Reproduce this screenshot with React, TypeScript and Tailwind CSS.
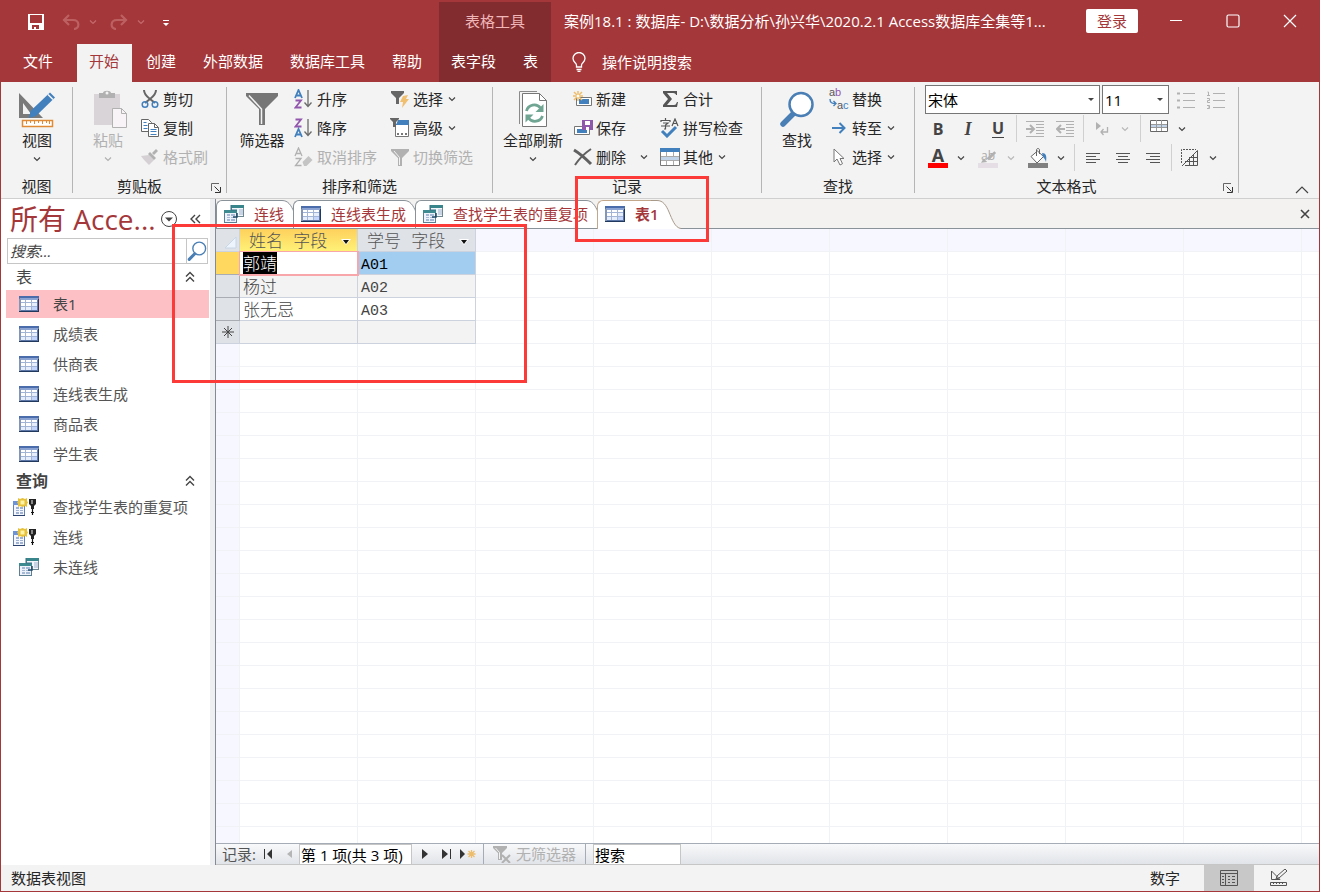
import React from 'react';
import clsx from 'clsx';

/* ---------- small glyphs ---------- */

const Chevron: React.FC<{ className?: string }> = ({ className = 'text-[#444]' }) => (
  <svg viewBox="0 0 8 6" className={clsx('h-[6px] w-[8px] shrink-0', className)} fill="none" stroke="currentColor" strokeWidth="1.2">
    <path d="M1 1.5 4 4.5 7 1.5" />
  </svg>
);

const DoubleUp = () => (
  <svg viewBox="0 0 10 12" className="h-3 w-[10px]" fill="none" stroke="#444" strokeWidth="1.4">
    <path d="M1 5.5 5 1.5 9 5.5M1 10.5 5 6.5 9 10.5" />
  </svg>
);

const Launcher = () => (
  <svg viewBox="0 0 10 10" className="h-[10px] w-[10px]" fill="none" stroke="#666" strokeWidth="1">
    <path d="M.5 8V.5H8" />
    <path d="M3.5 3.5 8.5 8.5M9.5 4V9.5H4" stroke="#333" />
  </svg>
);

const TableIcon = () => (
  <svg viewBox="0 0 20 16" className="h-4 w-5 shrink-0">
    <rect width="20" height="16" fill="#5d77a8" />
    <rect width="20" height="2" fill="#4a6cab" />
    <path d="M1 2h18v2H1z" fill="#8ba3d3" />
    <path d="M0 3h2v12H0z" fill="#8496b5" />
    <path d="M2 4h16v10H2z" fill="#a3b5d6" />
    <path d="M2 4h4v2H2zM7 4h5v2H7zM13 4h5v2h-5zM2 7h4v3H2zM7 7h5v3H7z" fill="#fff" />
    <path d="M13 7h5v3h-5zM2 11h4v3H2zM7 11h5v3H7z" fill="#e6edfb" />
    <path d="M13 11h5v3h-5z" fill="#c3d5fb" />
    <path d="M0 15h20v1H0zM19 3h1v13h-1z" fill="#22395f" />
  </svg>
);

const QueryIcon = () => (
  <svg viewBox="0 0 20 18" className="h-[18px] w-5 shrink-0">
    <path d="M7 0h13v12H7z" fill="#6c8790" />
    <path d="M7 0h13v3H7z" fill="#38868c" />
    <path d="M8 3h11v8H8z" fill="#f3f6fb" />
    <path d="M15 5h4M15 7h4M15 9h4" stroke="#9db1cd" />
    <path d="M0 5h13v13H0z" fill="#5c7f93" />
    <path d="M0 5h13v3H0z" fill="#3d8a90" />
    <path d="M1 8h11v9H1z" fill="#eef3fb" />
    <path d="M3 9h3v2H3zM7 9h4v2H7zM3 12h3v1H3zM7 12h4v1H7zM3 14h3v2H3zM7 14h4v2H7z" fill="#a5b8d6" />
    <path d="M13 8v4H9" fill="none" stroke="#1d4867" strokeWidth="1.5" />
    <path d="M7 0v5h6" fill="none" stroke="#3a6f86" />
  </svg>
);

const MakeTableIcon = () => (
  <svg viewBox="0 0 24 18" className="h-[18px] w-6 shrink-0">
    <path d="M.5 3.500H11.500V17.500H.5z" fill="#f4f7fd" stroke="#6580b4" />
    <path d="M0 3h9v4H0z" fill="#6d94d8" />
    <path d="M3 9h3v2H3zM7 9h3v2H7zM3 12h3v1H3zM7 12h3v1H7zM3 14h3v2H3zM7 14h3v2H7z" fill="#9fb2d2" />
    <path d="M0 17h12v1H0z" fill="#2a4270" />
    <path d="M5 0l2 1 2.500-1L12 1l2-1v3l1 1.500L14 6v3l-2-1-2.500 1L7 8 5 9V6L4 4.500 5 3z" fill="#e6c13a" />
    <path d="M7.500 2.500h4v4h-4z" fill="#fff3a8" />
    <path d="M16 1h7v5l-2 2v3h-3V8l-2-2z" fill="#222" />
    <path d="M18 2h2v4h-2z" fill="#888" />
    <path d="M19.500 11v6M18 14.500h3" stroke="#111" strokeWidth="1.200" />
  </svg>
);

const Magnifier: React.FC<{ size: string; fill?: string }> = ({ size, fill = 'none' }) => (
  <svg viewBox="0 0 36 36" className={size}>
    <path d="M14 23 4 33" stroke="#4a7fb5" strokeWidth="5.500" strokeLinecap="round" />
    <circle cx="22" cy="13.500" r="11.500" fill={fill} stroke="#4a7fb5" strokeWidth="2.500" />
  </svg>
);

const FunnelSmall: React.FC<{ color: string }> = ({ color }) => (
  <svg viewBox="0 0 20 18" className="h-[18px] w-5">
    <path d="M1 1h18v2l-7 7v8H8v-8L1 3z" fill={color} />
    <path d="M4 3l5.500 6.500V17" fill="none" stroke="#f3f3f3" />
  </svg>
);

const SortIcon: React.FC<{ top: string; bottom: string; off?: boolean }> = ({ top, bottom, off }) => {
  const blue = off ? '#b1b1b1' : '#4280bd';
  const purple = off ? '#b1b1b1' : '#9256ad';
  const draw = (l: string, y: number) =>
    l === 'A' ? (
      <path d={`M1 ${y + 8} 4.500 ${y} 8 ${y + 8}M2.500 ${y + 5.500}H6.500`} stroke={blue} />
    ) : (
      <path d={`M1.500 ${y + .5}H7L1.500 ${y + 7.500}H7.500`} stroke={purple} />
    );
  return (
    <svg viewBox="0 0 20 20" className="h-5 w-5" fill="none" strokeWidth={off ? 1.3 : 1.8}>
      {draw(top, 1)}
      {draw(bottom, 11)}
      {off ? (
        <path d="m8.500 15 6-6 4 4-6 6H10z" fill="#c4c4c4" />
      ) : (
        <path d="M14 1v16M10.500 13.500 14 17.500l3.500-4" stroke="#6b6b6b" strokeWidth="1.300" />
      )}
    </svg>
  );
};

/* ---------- ribbon pieces ---------- */

interface BigProps {
  icon: React.ReactNode;
  label: string;
  wide?: boolean;
  arrow?: boolean;
  disabled?: boolean;
}

const BigButton: React.FC<BigProps> = ({ icon, label, wide, arrow, disabled }) => (
  <button className={clsx('flex h-[87px] shrink-0 flex-col items-center pt-[5px]', wide ? 'w-16' : 'w-12', disabled && 'text-[#b1b1b1]')}>
    <span className="flex h-10 items-center">{icon}</span>
    <span className="leading-[22px] whitespace-nowrap">{label}</span>
    {arrow && <span className="flex h-4 items-center"><Chevron className={disabled ? 'text-[#b1b1b1]' : 'text-[#444]'} /></span>}
  </button>
);

interface SmallProps {
  icon: React.ReactNode;
  label: string;
  arrow?: boolean;
  disabled?: boolean;
}

const SmallButton: React.FC<SmallProps> = ({ icon, label, arrow, disabled }) => (
  <button className={clsx('flex h-[29px] items-center gap-[3px] whitespace-nowrap', disabled && 'text-[#b1b1b1]')}>
    <span className="flex w-5 shrink-0 justify-center">{icon}</span>
    {label}
    {arrow && <Chevron className="ml-[2px] text-[#444]" />}
  </button>
);

interface GroupProps {
  title: string;
  width: string;
  launcher?: boolean;
  children: React.ReactNode;
}

const Group: React.FC<GroupProps> = ({ title, width, launcher, children }) => (
  <>
    <section className={clsx('flex shrink-0 flex-col pt-[2px]', width)} aria-label={title}>
      <div className="flex h-[88px] items-start gap-2">{children}</div>
      <div className="flex h-[26px] items-center pt-[2px]">
        <h2 className="flex-1 text-center">{title}</h2>
        {launcher && (
          <button className="flex w-5 justify-center pt-[3px]" aria-label={`${title}设置`}><Launcher /></button>
        )}
      </div>
    </section>
    <span className="my-[5px] w-px shrink-0 bg-[#b5b5b5]" />
  </>
);

const Tool: React.FC<{ label: string; arrow?: boolean; disabled?: boolean; children: React.ReactNode }> = ({ label, arrow, disabled, children }) => (
  <button aria-label={label} className="flex h-[29px] shrink-0 items-center">
    <span className="flex w-[30px] justify-center">{children}</span>
    {arrow && <span className="flex w-4 justify-center"><Chevron className={disabled ? 'text-[#b8b8b8]' : 'text-[#444]'} /></span>}
  </button>
);

const ToolSep = () => <span className="mx-[3px] h-[27px] w-px shrink-0 bg-[#d0d0d0]" />;

const Picker: React.FC<{ label: string; value: string; width: string; font: string }> = ({ label, value, width, font }) => (
  <div className={clsx('relative h-[29px] shrink-0', width)}>
    <select aria-label={label} className={clsx('h-full w-full appearance-none border border-[#767676] bg-white px-[2px] text-[15px] text-black', font)}>
      <option>{value}</option>
    </select>
    <svg viewBox="0 0 6 3" className="pointer-events-none absolute top-[13px] right-[6px] h-[3px] w-[6px]"><path d="M0 0h6L3 3z" fill="#444" /></svg>
  </div>
);

const AlignIcon: React.FC<{ side: 'left' | 'center' | 'right' }> = ({ side }) => {
  const short = side === 'left' ? 'M1' : side === 'center' ? 'M3' : 'M5';
  return (
    <svg viewBox="0 0 16 12" className="h-3 w-4" stroke="#555">
      <path d={`M1 1.500h14${short} 4.500h10M1 7.500h14${short} 10.500h10`} />
    </svg>
  );
};

const IndentIcon: React.FC<{ out?: boolean }> = ({ out }) => (
  <svg viewBox="0 0 18 16" className="h-4 w-[18px]" fill="none" stroke="#b1b1b1">
    <path d="M0 .5h18M10 3.500h8M10 6.500h8M10 9.500h8M10 12.500h8M0 15.500h18" />
    <path d={out ? 'M9 8H2M5 4 1 8l4 4' : 'M0 8h7M4 4l4 4-4 4'} strokeWidth="2" />
  </svg>
);

const Ribbon = () => (
  <div className="flex h-[117px] shrink-0 overflow-hidden border-b border-[#cfcfcf] bg-[#f3f3f3] text-[#262626]">
    <Group title="视图" width="w-[71px]">
      <span className="w-1 shrink-0" />
      <BigButton
        label="视图"
        arrow
        icon={
          <svg viewBox="0 0 38 38" className="h-[38px] w-[38px]">
            <path d="M1 3v25h24zM5 13v11h8z" fill="#7a7a7a" fillRule="evenodd" />
            <path d="m11 28 1.500-7L32 2.500l5 5L18 26z" fill="#4280bd" />
            <path d="m30 4.500 5 5" stroke="#f3f3f3" strokeWidth="1.500" />
            <path d="M4.500 30.500h30v6h-30z" fill="#fff" stroke="#e08a35" strokeWidth="1.500" />
            <path d="M8.500 31v3M12.500 31v2M16.500 31v3M20.500 31v2M24.500 31v3M28.500 31v2M31.500 31v3" stroke="#e08a35" />
          </svg>
        }
      />
    </Group>

    <Group title="剪贴板" width="w-[153px]" launcher>
      <span className="w-[3px] shrink-0" />
      <BigButton
        label="粘贴"
        arrow
        disabled
        icon={
          <svg viewBox="0 0 38 38" className="h-[38px] w-[38px]">
            <path d="M5 4h26v31H5z" fill="#d8d4d8" />
            <path d="M10 8V3h4c0-3 8-3 8 0h4v5z" fill="#b1b1b1" />
            <circle cx="18" cy="3" r="1.500" fill="#f3f3f3" />
            <path d="M23.500 18.500h9l5 5v14h-14z" fill="#f7f3f7" stroke="#b1b1b1" />
            <path d="M32.500 18.500v5h5" fill="none" stroke="#b1b1b1" />
          </svg>
        }
      />
      <div className="flex flex-col">
        <SmallButton
          label="剪切"
          icon={
            <svg viewBox="0 0 18 20" className="h-5 w-[18px]" fill="none">
              <path d="M3 1c0 4 2 6 6 9l5 4M15 1c0 4-2 6-6 9l-5 4" stroke="#666" strokeWidth="2" />
              <circle cx="4" cy="15.500" r="2.800" stroke="#4280bd" strokeWidth="1.500" />
              <circle cx="14" cy="15.500" r="2.800" stroke="#4280bd" strokeWidth="1.500" />
            </svg>
          }
        />
        <SmallButton
          label="复制"
          icon={
            <svg viewBox="0 0 18 18" className="h-[18px] w-[18px]" fill="#fff" stroke="#666">
              <path d="M.5.5h7l3 3v9H.5z" />
              <path d="M7.500 4.500h6l4 4v9h-10z" />
              <path d="M13.500 4.500v4h4" fill="none" />
              <path d="M2.500 3.500h3M2.500 6.500h4M2.500 9.500h4M9.500 10.500h6M9.500 12.500h6M9.500 15.500h6" stroke="#4280bd" />
            </svg>
          }
        />
        <SmallButton
          label="格式刷"
          disabled
          icon={
            <svg viewBox="0 0 18 16" className="h-4 w-[18px]">
              <path d="m0 7 8-1 5 5-5 5C5 13 2 10 0 7z" fill="#d4d0d4" />
              <path d="m7 5 6 6 2-2-6-6zM11 4l4-4 2 2-4 4z" fill="#b1b1b1" />
            </svg>
          }
        />
      </div>
    </Group>

    <Group title="排序和筛选" width="w-[265px]">
      <span className="w-[3px] shrink-0" />
      <BigButton
        label="筛选器"
        icon={
          <svg viewBox="0 0 32 32" className="h-8 w-8">
            <path d="M0 0h32v3L19 16v16h-6V16L0 3z" fill="#767676" />
            <path d="M3 2.500 15.500 16v15" fill="none" stroke="#f3f3f3" strokeWidth="1.500" />
          </svg>
        }
      />
      <div className="flex flex-col">
        <SmallButton label="升序" icon={<SortIcon top="A" bottom="Z" />} />
        <SmallButton label="降序" icon={<SortIcon top="Z" bottom="A" />} />
        <SmallButton label="取消排序" disabled icon={<SortIcon top="A" bottom="Z" off />} />
      </div>
      <div className="ml-[5px] flex flex-col">
        <SmallButton
          label="选择"
          arrow
          icon={
            <svg viewBox="0 0 20 18" className="h-[18px] w-5">
              <path d="M1 1h13v2L9 8v6H6V8L1 3z" fill="#666" />
              <path d="m13 6 5-1-2 4h3l-7 9 1-6h-3z" fill="#f0c070" />
            </svg>
          }
        />
        <SmallButton
          label="高级"
          arrow
          icon={
            <svg viewBox="0 0 20 20" className="h-5 w-5">
              <path d="M5.500 6.500h13v12h-13z" fill="#fff" stroke="#767676" />
              <path d="M8 2h11v5H6z" fill="#4280bd" />
              <path d="M0 0h9v1L6 4v5H3V4L0 1z" fill="#666" />
              <path d="M7 15h2v2H7zM11 15h2v2h-2zM15 15h2v2h-2z" fill="#777" />
            </svg>
          }
        />
        <SmallButton label="切换筛选" disabled icon={<FunnelSmall color="#b1b1b1" />} />
      </div>
    </Group>

    <Group title="记录" width="w-[268px]">
      <span />
      <BigButton
        label="全部刷新"
        wide
        arrow
        icon={
          <svg viewBox="0 0 30 38" className="h-[38px] w-[30px]" fill="none">
            <path d="M1.500 34V1.500H19" stroke="#8a8a8a" />
            <path d="M4.500 3.500h17l7 7v26h-24z" fill="#fff" stroke="#767676" />
            <path d="M21.500 3.500v7h7" stroke="#767676" />
            <path d="M8.500 21a8 8 0 0 1 14-3M24.500 26a8 8 0 0 1-14 2" stroke="#6fa592" strokeWidth="2.800" />
            <path d="M25.500 14v8h-8zM7.500 32.500v-8h8z" fill="#6fa592" />
          </svg>
        }
      />
      <div className="flex w-[79px] flex-col">
        <SmallButton
          label="新建"
          icon={
            <svg viewBox="0 0 20 16" className="h-4 w-5">
              <path d="M3.500 6.500h15v8h-15z" fill="#fff" stroke="#767676" />
              <path d="M6 8h10v5H6z" fill="#4280bd" />
              <path d="M5 0v10M0 5h10M1 1l8 8M9 1 1 9" stroke="#edbd6c" strokeWidth="1.500" />
              <circle cx="5" cy="5" r="1.500" fill="#fff" />
            </svg>
          }
        />
        <SmallButton
          label="保存"
          icon={
            <svg viewBox="0 0 20 16" className="h-4 w-5">
              <path d="M1.500 6.500h15v8h-15z" fill="#fff" stroke="#767676" />
              <path d="M4 9h10v4H4z" fill="#4280bd" />
              <path d="M9 0h11v10H9z" fill="#8f57ab" />
              <path d="M12 1h5v4h-5zM13 7h3v3h-3z" fill="#fff" />
            </svg>
          }
        />
        <div className="flex items-center justify-between">
          <SmallButton
            label="删除"
            icon={
              <svg viewBox="0 0 20 18" className="h-[18px] w-5" fill="none" stroke="#606060">
                <path d="M1 2c5 3 12 9 17 14" strokeWidth="3" />
                <path d="M18 1C12 5 6 11 2 17" strokeWidth="2" />
              </svg>
            }
          />
          <button className="px-1" aria-label="删除选项"><Chevron /></button>
        </div>
      </div>
      <div className="flex flex-col">
        <SmallButton
          label="合计"
          icon={
            <svg viewBox="0 0 16 16" className="h-4 w-4">
              <path d="M1 0h14v4h-1c0-1-1-2-3-2H5l5 6-5 6h7c2 0 2-1 3-3h1l-1 5H1v-2l5-6L1 2z" fill="#555" />
            </svg>
          }
        />
        <SmallButton
          label="拼写检查"
          icon={
            <svg viewBox="0 0 20 20" className="h-5 w-5" fill="none" stroke="#555">
              <path d="M1 4V2.500h9V4M5.500 0v2M3 5h5L5.500 7v4H4M1 8h9M12 8l3-7 3 7M13 5.500h4" strokeWidth="1.200" />
              <path d="m2 13 5 5 9-9" stroke="#4280bd" strokeWidth="3" />
            </svg>
          }
        />
        <SmallButton
          label="其他"
          arrow
          icon={
            <svg viewBox="0 0 20 18" className="h-[18px] w-5">
              <path d="M.5.5h19v17H.5z" fill="#fff" stroke="#777" />
              <path d="M0 0h20v4H0z" fill="#4280bd" />
              <path d="M1 8h18v5H1z" fill="#c1d3e8" />
              <path d="M6.500 4v4M13.500 4v4M6.500 13v4M13.500 13v4M1 8.500h18M1 12.500h18" stroke="#aaa" />
            </svg>
          }
        />
      </div>
    </Group>

    <Group title="查找" width="w-[152px]">
      <span className="w-[3px] shrink-0" />
      <BigButton label="查找" icon={<Magnifier size="h-9 w-9" fill="#fff" />} />
      <div className="flex flex-col">
        <SmallButton
          label="替换"
          icon={
            <svg viewBox="0 0 20 20" className="h-5 w-5 overflow-visible" fontSize="11" fontFamily="Liberation Sans, sans-serif">
              <text x="0" y="7" fill="#555">a</text>
              <text x="6" y="7" fill="#9256ad">b</text>
              <text x="8" y="20" fill="#555">a</text>
              <text x="14" y="20" fill="#4280bd">c</text>
              <path d="M1 10c0 4 2 4.500 6 4.500M4.500 12l2.500 2.500L4.500 17" fill="none" stroke="#4280bd" strokeWidth="1.400" />
            </svg>
          }
        />
        <SmallButton
          label="转至"
          arrow
          icon={
            <svg viewBox="0 0 16 12" className="h-3 w-4" fill="none" stroke="#4280bd" strokeWidth="2">
              <path d="M1 6h12M8.500 1l5 5-5 5" />
            </svg>
          }
        />
        <SmallButton
          label="选择"
          arrow
          icon={
            <svg viewBox="0 0 12 18" className="h-[18px] w-3" fill="#fff" stroke="#767676">
              <path d="M1 1v13l3-3 3 6 2.500-1.300L7 10.500h4z" />
            </svg>
          }
        />
      </div>
    </Group>

    <Group title="文本格式" width="w-[323px]" launcher>
      <div className="flex flex-col pt-px pl-2">
        <div className="flex h-[29px] items-center gap-[2px] pl-[2px]">
          <Picker label="字体" value="宋体" width="w-[175px]" font="font-['Noto_Sans_CJK_SC',sans-serif]" />
          <Picker label="字号" value="11" width="w-[67px]" font="font-['Open_Sans',sans-serif]" />
          <div className="flex">
            <Tool label="项目符号">
              <svg viewBox="0 0 18 18" className="h-[18px] w-[18px]" stroke="#b1b1b1" fill="#b1b1b1">
                <path d="M6 2.500h12M6 9.500h12M6 16.500h12" />
                <path d="M0 1.500h3v2H0zM0 8.500h3v2H0zM0 15.500h3v2H0z" stroke="none" />
              </svg>
            </Tool>
            <Tool label="编号">
              <svg viewBox="0 0 18 18" className="h-[18px] w-[18px]" stroke="#b1b1b1" fill="none">
                <path d="M6 2.500h12M6 9.500h12M6 16.500h12" />
                <path d="M.5 1h1v4M0 4.500h3M0 7.500h2.500v2H.5v2H3M0 14.500h2.500v3H0M1 16h1" />
              </svg>
            </Tool>
          </div>
        </div>
        <div className="flex h-[29px] items-center text-[#444]">
          <Tool label="加粗"><b className="text-base">B</b></Tool>
          <Tool label="倾斜"><i className="font-['Liberation_Serif',serif] text-lg font-bold">I</i></Tool>
          <Tool label="下划线"><span className="border-b border-[#444] text-base leading-[17px] font-bold">U</span></Tool>
          <ToolSep />
          <Tool label="增加缩进"><IndentIcon /></Tool>
          <Tool label="减少缩进"><IndentIcon out /></Tool>
          <ToolSep />
          <Tool label="文字方向" arrow disabled>
            <svg viewBox="0 0 14 14" className="h-[14px] w-[14px]">
              <path d="M1 0v8l5-4z" fill="#b1b1b1" />
              <path d="M12.500 5v5H6M8.500 7 6 10l2.500 3" fill="none" stroke="#b1b1b1" strokeWidth="1.300" />
            </svg>
          </Tool>
          <span className="w-1" />
          <ToolSep />
          <Tool label="网格线" arrow>
            <svg viewBox="0 0 18 18" className="h-[18px] w-[18px]">
              <path d="M.5.500h17v11H.5z" fill="#fff" stroke="#666" />
              <path d="M1 4h16v4H1z" fill="#c1d3e8" />
              <path d="M6.500 0v11M11.500 0v11M1 4.500h16M1 7.500h16" stroke="#999" fill="none" />
            </svg>
          </Tool>
        </div>
        <div className="flex h-[29px] items-center">
          <Tool label="字体颜色" arrow>
            <span className="flex w-5 flex-col items-center border-b-[5px] border-[#f00] text-lg leading-[15px] font-bold text-[#444]">A</span>
          </Tool>
          <span className="w-1" />
          <Tool label="突出显示" arrow disabled>
            <span className="relative flex w-5 flex-col border-b-[5px] border-[#e5dfe5] text-xs leading-[15px] text-[#aaa]">
              ab
              <svg viewBox="0 0 18 14" className="absolute top-[3px] left-[3px] h-[13px] w-4">
                <path d="m0 13 3-5 4 4zM6 8l9-8 2 2-8 8z" fill="#b1b1b1" />
              </svg>
            </span>
          </Tool>
          <span className="w-1" />
          <Tool label="背景色" arrow>
            <svg viewBox="0 0 20 20" className="h-5 w-5">
              <path d="M3 8.500 9.500 3l6 5.500L9 15z" fill="#fff" stroke="#666" />
              <path d="M8.500 8V2c0-2 3-2 3 0v4" fill="none" stroke="#666" />
              <path d="M14 5c4 0 5 3 4 9-1-3-2-4-3-5z" fill="#4280bd" />
              <path d="M0 15h20v5H0z" fill="#808080" />
            </svg>
          </Tool>
          <span className="w-[2px]" />
          <ToolSep />
          <Tool label="左对齐"><AlignIcon side="left" /></Tool>
          <Tool label="居中"><AlignIcon side="center" /></Tool>
          <Tool label="右对齐"><AlignIcon side="right" /></Tool>
          <ToolSep />
          <Tool label="可选行颜色" arrow>
            <svg viewBox="0 0 18 18" className="h-[18px] w-[18px]" fill="none" stroke="#555">
              <path d="M.5 14V.5H15" strokeDasharray="2 1" />
              <path d="M1 17 16.500 1.500V16.500H4M4 12.500h13M8 8.500h9M8.500 9v8M12.500 5v12" />
            </svg>
          </Tool>
        </div>
      </div>
    </Group>

    <div className="flex flex-1 items-end justify-end pr-[10px] pb-1">
      <button aria-label="折叠功能区">
        <svg viewBox="0 0 14 8" className="h-2 w-[14px]" fill="none" stroke="#444" strokeWidth="1.200"><path d="m1 7 6-6 6 6" /></svg>
      </button>
    </div>
  </div>
);

/* ---------- window header ---------- */

const ribbonTabs = ['创建', '外部数据', '数据库工具', '帮助'];

const Header = () => (
  <header className="flex h-[82px] shrink-0 bg-[#a4373a] text-white">
    <div className="flex w-[438px] shrink-0 flex-col">
      <div className="flex h-11 items-center pl-[27px]">
        <button aria-label="保存">
          <svg viewBox="0 0 16 16" className="h-4 w-4">
            <path d="M0 0h16v16H0zM2 1v8h12V1zM4 11v4h2v-2h2v2h3v-4z" fill="#fff" fillRule="evenodd" />
          </svg>
        </button>
        <button className="ml-[18px] flex items-center gap-[9px]" aria-label="撤消">
          <svg viewBox="0 0 18 16" className="h-4 w-[18px]" fill="none" stroke="#bd6062" strokeWidth="2.200"><path d="M7 1 2 6l5 5M2 6h9c7 0 7 9 1 9" /></svg>
          <Chevron className="text-[#c46a6c]" />
        </button>
        <button className="ml-[13px] flex items-center gap-[9px]" aria-label="恢复">
          <svg viewBox="0 0 18 16" className="h-4 w-[18px]" fill="none" stroke="#bd6062" strokeWidth="2.200"><path d="m11 1 5 5-5 5M16 6H7c-7 0-7 9-1 9" /></svg>
          <Chevron className="text-[#c46a6c]" />
        </button>
        <button className="ml-[18px]" aria-label="自定义快速访问工具栏">
          <svg viewBox="0 0 6 6" className="mt-[2px] h-[6px] w-[6px]"><path d="M0 0h6v1H0zM0 3h6L3 6z" fill="#fff" /></svg>
        </button>
      </div>
      <nav className="flex h-[38px] gap-px whitespace-nowrap">
        <button className="mr-[10px] pr-[13px] pl-[22px] pb-1">文件</button>
        <button className="bg-[#f3f3f3] pr-[13px] pl-3 pb-1 text-[#a4373a]">开始</button>
        {ribbonTabs.map((t) => <button key={t} className="px-[13px] pb-1">{t}</button>)}
      </nav>
    </div>
    <div className="mt-[2px] flex w-[112px] shrink-0 flex-col bg-[#822c2f]">
      <span className="flex h-[42px] items-center justify-center pb-1 text-[#f0b6b8]">表格工具</span>
      <div className="flex h-[38px] justify-between pr-[13px] pl-3 pb-1">
        <button>表字段</button>
        <button>表</button>
      </div>
    </div>
    <div className="flex min-w-0 flex-1 flex-col">
      <div className="flex h-[42px] items-center pr-px pl-[13px]">
        <h1 className="flex-1 truncate">案例18.1 : 数据库- D:\数据分析\孙兴华\2020.2.1 Access数据库全集等1...</h1>
        <button className="ml-5 h-6 w-[52px] shrink-0 rounded-[2px] bg-white text-[#a4373a]">登录</button>
        <button className="ml-[9px] flex w-[57px] shrink-0 justify-center" aria-label="最小化">
          <svg viewBox="0 0 14 14" className="h-[14px] w-[14px]" stroke="#fff"><path d="M1 6.500h12" /></svg>
        </button>
        <button className="flex w-[57px] shrink-0 justify-center" aria-label="最大化">
          <svg viewBox="0 0 14 14" className="h-[14px] w-[14px]" stroke="#fff" fill="none" strokeWidth="1.200"><rect x="1" y="1" width="12" height="12" rx="1.500" /></svg>
        </button>
        <button className="flex w-[57px] shrink-0 justify-center" aria-label="关闭">
          <svg viewBox="0 0 14 14" className="h-[14px] w-[14px]" stroke="#fff" strokeWidth="1.200"><path d="m1 1 12 12M13 1 1 13" /></svg>
        </button>
      </div>
      <button className="flex h-10 items-center gap-4 pl-[21px]">
        <svg viewBox="0 0 14 20" className="h-5 w-[14px]" fill="none" stroke="#fff" strokeWidth="1.300">
          <path d="M4.500 15v-2C4.500 11 1 10 1 6.500a6 6 0 0 1 12 0C13 10 9.500 11 9.500 13v2zM4.500 17.500h5M5.500 19.500h3" />
        </svg>
        操作说明搜索
      </button>
    </div>
  </header>
);

/* ---------- navigation pane ---------- */

const tables = ['表1', '成绩表', '供商表', '连线表生成', '商品表', '学生表'];
const queries = [
  { name: '查找学生表的重复项', make: true },
  { name: '连线', make: true },
  { name: '未连线', make: false },
];

const NavHeading: React.FC<{ bold?: boolean; children: string }> = ({ bold, children }) => (
  <button className="flex h-6 w-full items-center justify-between pr-[14px] pl-[15px] text-base text-[#444]">
    <span className={bold ? 'font-semibold' : ''}>{children}</span>
    <DoubleUp />
  </button>
);

const NavPane = () => (
  <aside className="flex w-[215px] shrink-0 border-r border-r-[#868a94] bg-white">
    <div className="w-[208px] text-[#555]">
      <div className="flex h-[39px] items-center pl-[9px]">
        <h2 className="w-[150px] text-[28px] leading-9 whitespace-nowrap text-[#a4373a]">所有 Acce...</h2>
        <button aria-label="浏览类别">
          <svg viewBox="0 0 18 18" className="h-[18px] w-[18px]" fill="none" stroke="#444"><circle cx="9" cy="9" r="7.500" /><path d="M5 7.500h8l-4 4z" fill="#444" stroke="none" /></svg>
        </button>
        <button className="ml-3" aria-label="折叠导航窗格">
          <svg viewBox="0 0 11 10" className="h-[10px] w-[11px]" fill="none" stroke="#444" strokeWidth="1.400"><path d="M5 1 1 5l4 4M10 1 6 5l4 4" /></svg>
        </button>
      </div>
      <div className="mb-px ml-[6px] flex h-[26px] w-[201px] border border-[#c6c6c6]">
        <input aria-label="搜索导航窗格" placeholder="搜索..." className="w-[178px] px-[2px] italic outline-none placeholder:text-[#444]" />
        <button className="flex flex-1 items-center justify-center border-l border-[#c6c6c6]" aria-label="搜索"><Magnifier size="h-5 w-5" /></button>
      </div>
      <NavHeading>表</NavHeading>
      <ul className="pl-[5px]">
        {tables.map((t, i) => (
          <li key={t} className="py-px">
            <button className={clsx('flex h-7 w-full items-center gap-[14px] pl-[13px]', i === 0 && 'bg-[#fdc1c5] text-[#444]')}>
              <TableIcon />
              {t}
            </button>
          </li>
        ))}
      </ul>
      <NavHeading bold>查询</NavHeading>
      <ul className="pl-[5px]">
        {queries.map((q) => (
          <li key={q.name} className="pb-[2px]">
            <button className={clsx('flex h-7 w-full items-center', q.make ? 'gap-4 pl-[7px]' : 'gap-[14px] pl-[13px]')}>
              {q.make ? <MakeTableIcon /> : <QueryIcon />}
              {q.name}
            </button>
          </li>
        ))}
      </ul>
    </div>
    <div className="ml-px flex-1 bg-[#eeeff1]" />
  </aside>
);

/* ---------- documents ---------- */

const docs = [
  { name: '连线', query: true },
  { name: '连线表生成', query: false },
  { name: '查找学生表的重复项', query: true },
  { name: '表1', query: false, active: true },
];

const DocTabs = () => (
  <div className="flex h-[30px] shrink-0 items-stretch border-b border-[#8a9299] bg-[#f3f2f1]">
    {docs.map((d) => (
      <button
        key={d.name}
        className={clsx('relative -mb-px flex items-center gap-[10px] pr-[22px] pl-2 whitespace-nowrap text-[#a4373a] not-first:-ml-[13px]', d.active ? 'font-semibold' : '')}
      >
        <span
          className={clsx(
            'absolute top-px right-[30px] bottom-0 left-0 rounded-tl-[6px] border-t border-l bg-white',
            d.active ? 'border-[#c3a78b]' : 'border-b border-[#8a9299]',
          )}
        />
        <svg viewBox="0 0 30 29" className="absolute top-px right-0 h-[29px] w-[30px]" stroke={d.active ? '#a89a8b' : '#8a9299'}>
          <path d="M0 .5H6C12 .5 15 5 18 12S24 28 30 28.500V29H0z" fill="#fff" stroke="none" />
          <path d="M0 .5H6C12 .5 15 5 18 12S24 28 30 28.500" fill="none" />
          {!d.active && <path d="M0 28.500h30" fill="none" />}
        </svg>
        <span className="relative flex">{d.query ? <QueryIcon /> : <TableIcon />}</span>
        <span className="relative">{d.name}</span>
      </button>
    ))}
    <button className="ml-auto px-2" aria-label="关闭表1">
      <svg viewBox="0 0 12 10" className="h-[10px] w-3" stroke="#444" strokeWidth="1.600"><path d="m2 1 8 8M10 1 2 9" /></svg>
    </button>
  </div>
);

const rows = [
  { name: '郭靖', id: 'A01' },
  { name: '杨过', id: 'A02' },
  { name: '张无忌', id: 'A03' },
];

const ColumnHead: React.FC<{ first?: boolean; children: string }> = ({ first, children }) => (
  <th
    scope="col"
    className={clsx(
      'h-[23px] border-r border-b border-[#cdd3de] p-0 font-light text-[#555]',
      first ? 'bg-linear-to-b from-[#fdd05c] to-[#fff176]' : 'bg-[#dfe2e7]',
    )}
  >
    <button className="flex h-[22px] w-full items-center justify-between pr-[6px] pl-[9px] whitespace-nowrap">
      <span className="pt-[6px] leading-4">{children}</span>
      <svg viewBox="0 0 10 6" className="mt-1 h-[6px] w-[10px]"><path d="M0 0h10L5 6z" fill="#fff" /><path d="M2 1h6L5 5z" fill="#111" /></svg>
    </button>
  </th>
);

const Datasheet = () => (
  <div className="min-h-0 flex-1 overflow-hidden bg-white bg-[repeating-linear-gradient(to_right,#f1f2f5_23px_24px,transparent_24px_141px),repeating-linear-gradient(to_bottom,#f1f2f5_22px_23px,transparent_23px_45px),linear-gradient(to_right,#f6f7ff_23px,transparent_23px),linear-gradient(to_bottom,#f6f7ff_22px,transparent_22px)]">
    <table className="w-[260px] table-fixed border-separate border-spacing-0 font-['Liberation_Mono','Noto_Sans_CJK_SC',monospace] text-[17px] font-light text-[#444]">
      <colgroup>
        <col className="w-6" />
        <col className="w-[118px]" />
        <col className="w-[118px]" />
      </colgroup>
      <thead>
        <tr>
          <td className="border-r border-b border-[#cdd3de] bg-[#dfe2e7] p-0">
            <svg viewBox="0 0 23 22" className="h-[22px] w-[23px]"><path d="M20 8v11H9z" fill="#eef4fb" stroke="#c8d6e6" /></svg>
          </td>
          <ColumnHead first>姓名 字段</ColumnHead>
          <ColumnHead>学号 字段</ColumnHead>
        </tr>
      </thead>
      <tbody>
        {rows.map((r, i) => (
          <tr key={r.id}>
            <td className={clsx('h-[23px] border-r border-b border-[#a9adb3] p-0', i === 0 ? 'bg-[#ffd95f]' : 'bg-[#dfe2e7]')} />
            <td
              className={clsx(
                'h-[23px] border-r border-b px-[3px] py-0',
                i === 0 ? 'border-[#f9a6aa] bg-white outline outline-[#f9a6aa]' : 'border-[#cdd3de]',
                i === 1 && 'bg-[#f3f3f3]',
                i === 2 && 'bg-white',
              )}
            >
              <span className={clsx('block w-fit pt-[6px] leading-4', i === 0 && 'bg-black text-white')}>{r.name}</span>
            </td>
            <td
              className={clsx(
                'h-[23px] border-r border-b border-[#cdd3de] px-[3px] pt-[6px] pb-0 text-[15px] leading-4',
                i === 0 ? 'bg-[#a3cdf0] text-black' : i === 1 ? 'bg-[#f3f3f3]' : 'bg-white',
              )}
            >
              {r.id}
            </td>
          </tr>
        ))}
        <tr>
          <td className="h-[23px] border-r border-b border-[#cdd3de] bg-[#dfe2e7] p-0">
            <svg viewBox="0 0 12 12" className="mx-auto h-3 w-3" stroke="#444"><path d="M6 0v12M0 6h12M2 2l8 8M10 2l-8 8" /></svg>
          </td>
          <td className="border-r border-b border-[#cdd3de] bg-[#f3f3f3] p-0" />
          <td className="border-r border-b border-[#cdd3de] bg-[#f3f3f3] p-0" />
        </tr>
      </tbody>
    </table>
  </div>
);

const RecordBar = () => (
  <div className="flex h-[22px] shrink-0 items-center border-t border-b border-t-[#a5acb5] border-b-[#c6c6c6] bg-linear-to-b from-[#f8f9fa] to-[#e1e4e9] whitespace-nowrap">
    <label htmlFor="record" className="w-[47px] pl-[6px] text-[#555]">记录:</label>
    <button aria-label="第一条记录"><svg viewBox="0 0 10 10" className="h-[10px] w-[10px]" fill="#333"><path d="M1 0h1v10H1zM9 0v10L4 5z" /></svg></button>
    <button className="ml-[13px]" aria-label="上一条记录"><svg viewBox="0 0 6 8" className="h-2 w-[6px]" fill="#b5b5b5"><path d="M6 0v8L1 4z" /></svg></button>
    <input id="record" defaultValue="第 1 项(共 3 项)" className="ml-[7px] h-5 w-[113px] border border-b-0 border-[#c6c6c6] bg-white px-px text-black outline-none" />
    <button className="ml-[10px]" aria-label="下一条记录"><svg viewBox="0 0 6 10" className="h-[10px] w-[6px]" fill="#333"><path d="M0 0v10l6-5z" /></svg></button>
    <button className="ml-[14px]" aria-label="尾记录"><svg viewBox="0 0 10 10" className="h-[10px] w-[10px]" fill="#333"><path d="M0 0v10l6-5zM8 0h1v10H8z" /></svg></button>
    <button className="ml-2" aria-label="新记录">
      <svg viewBox="0 0 16 10" className="h-[10px] w-4" fill="#333"><path d="M0 0v10l5-5z" /><path d="M11.500 1v8M7.500 5h8M8.500 2l6 6M14.500 2l-6 6" stroke="#edbd6c" strokeWidth="1.300" /></svg>
    </button>
    <span className="ml-[7px] h-full w-px bg-[#a5acb5]" />
    <button className="flex items-center gap-1 pl-2 text-[#b1b1b1]">
      <svg viewBox="0 0 20 18" className="h-[18px] w-5" fill="none">
        <path d="M1 1h14v2l-5 5v7H6V8L1 3z" fill="#b1b1b1" />
        <path d="M3.500 3 7.500 7.500V14" stroke="#f3f3f3" />
        <path d="m10 10 8 8M18 10l-8 8" stroke="#b1b1b1" strokeWidth="2" />
      </svg>
      无筛选器
    </button>
    <span className="ml-[9px] h-full w-px bg-[#a5acb5]" />
    <input aria-label="搜索记录" defaultValue="搜索" className="ml-[7px] h-5 w-[88px] border border-b-0 border-[#c6c6c6] bg-white px-px text-black outline-none" />
  </div>
);

const StatusBar = () => (
  <footer className="flex h-[26px] shrink-0 items-center bg-[#f3f3f3] pl-[10px] text-[#262626]">
    <span>数据表视图</span>
    <span className="mr-6 ml-auto">数字</span>
    <button className="flex h-full w-[50px] items-center justify-center bg-[#c8c8c8]" aria-label="数据表视图">
      <svg viewBox="0 0 18 16" className="h-4 w-[18px]" fill="none" stroke="#555">
        <path d="M.5.5h17v15H.5zM.5 3.500h17M5.500 3.500v12M8 6.500h2M12 6.500h3M8 9.500h2M12 9.500h3M8 12.500h2M12 12.500h3M2 6.500h2M2 9.500h2M2 12.500h2" />
      </svg>
    </button>
    <button className="mr-[15px] flex w-[50px] justify-center" aria-label="设计视图">
      <svg viewBox="0 0 18 18" className="h-[18px] w-[18px]" fill="none" stroke="#555">
        <path d="M1.500 2v8.500H10zM6 10l1-3 8-7 2 2-8 7z" />
        <path d="M.5 13.500h16v3H.5zM3.500 13v2M6.500 13v2M9.500 13v2M12.500 13v2" />
      </svg>
    </button>
  </footer>
);

export default function App() {
  return (
    <div className="relative flex h-screen flex-col overflow-hidden bg-[#a4373a] font-['Open_Sans','Noto_Sans_CJK_SC',sans-serif] text-[15px] leading-5">
      <div className="flex min-h-0 flex-1 flex-col border-x border-b border-[#a4373a]">
        <Header />
        <Ribbon />
        <div className="flex min-h-0 flex-1">
          <NavPane />
          <main className="flex min-w-0 flex-1 flex-col">
            <DocTabs />
            <Datasheet />
            <RecordBar />
          </main>
        </div>
        <StatusBar />
      </div>

      {/* callouts drawn over the window */}
      <div className="pointer-events-none absolute top-[224px] left-[172px] h-[159px] w-[355px] border-[3px] border-[#fc3a38]" />
      <div className="pointer-events-none absolute top-[176px] left-[575px] h-[66px] w-[134px] border-[3px] border-[#fc3a38]" />
    </div>
  );
}
